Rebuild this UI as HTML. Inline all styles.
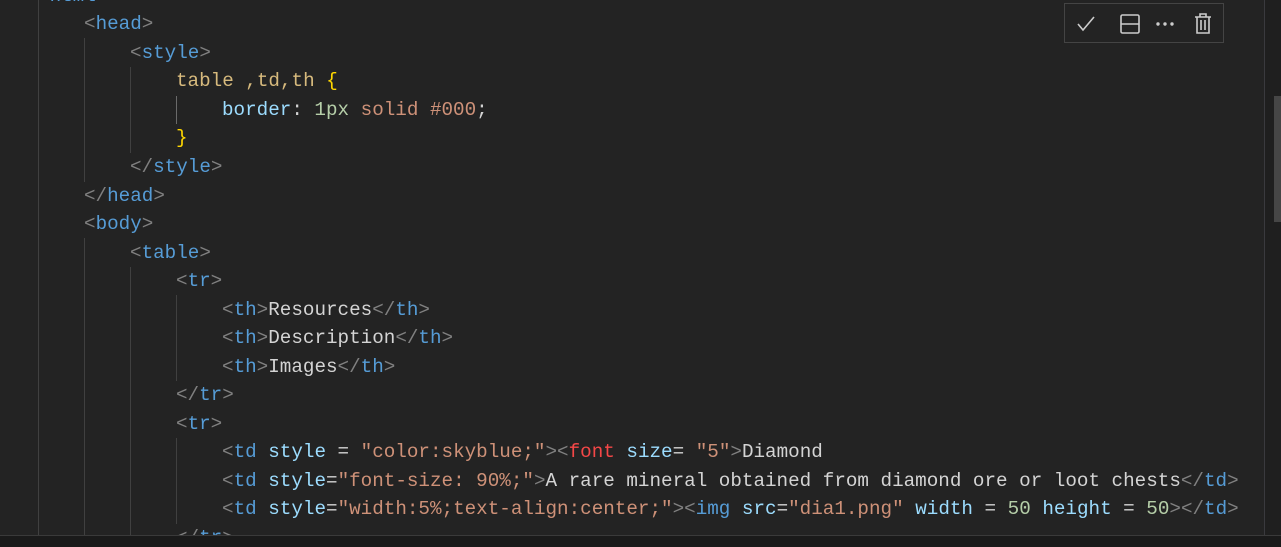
<!DOCTYPE html>
<html><head><style>
body{margin:0;width:1281px;height:547px;background:#1f1f1f;overflow:hidden;position:relative;font-family:"Liberation Mono",monospace;}
#ed{position:absolute;left:0;top:0;width:1264px;height:535px;background:#232323;overflow:hidden}
.l{position:absolute;left:0;height:28.6px;line-height:28.6px;font-size:19.25px;white-space:pre;color:#d4d4d4}
.g{position:absolute;width:1px;background:#404040}
.b{color:#808080}.t{color:#569cd6}.a{color:#9cdcfe}.s{color:#ce9178}.sel{color:#d7ba7d}.br{color:#ffd700}.n{color:#b5cea8}
#tb{position:absolute;left:1064px;top:3px;width:160px;height:40px;border:1px solid #444;background:#232323;box-sizing:border-box}
</style></head><body>
<div id="ed">
<div class="g" style="left:38px;top:0;height:535px"></div>
<div class="g" style="left:84px;top:38px;height:144px"></div>
<div class="g" style="left:84px;top:238px;height:297px"></div>
<div class="g" style="left:130px;top:67px;height:86px"></div>
<div class="g" style="left:130px;top:267px;height:268px"></div>
<div class="g" style="left:176px;top:96px;height:28px;background:#6a6a6a"></div>
<div class="g" style="left:176px;top:295px;height:86px"></div>
<div class="g" style="left:176px;top:438px;height:86px"></div>

<div class="l" style="top:-18px;left:38px"><span class="b">&lt;</span><span class="t">html</span><span class="b">&gt;</span></div>
<div class="l" style="top:10px;left:84px"><span class="b">&lt;</span><span class="t">head</span><span class="b">&gt;</span></div>
<div class="l" style="top:39px;left:130px"><span class="b">&lt;</span><span class="t">style</span><span class="b">&gt;</span></div>
<div class="l" style="top:67px;left:176px"><span class="sel">table ,td,th</span> <span class="br">{</span></div>
<div class="l" style="top:96px;left:222px"><span class="a">border</span>: <span class="n">1px</span> <span class="s">solid #000</span>;</div>
<div class="l" style="top:124px;left:176px"><span class="br">}</span></div>
<div class="l" style="top:153px;left:130px"><span class="b">&lt;/</span><span class="t">style</span><span class="b">&gt;</span></div>
<div class="l" style="top:182px;left:84px"><span class="b">&lt;/</span><span class="t">head</span><span class="b">&gt;</span></div>
<div class="l" style="top:210px;left:84px"><span class="b">&lt;</span><span class="t">body</span><span class="b">&gt;</span></div>
<div class="l" style="top:239px;left:130px"><span class="b">&lt;</span><span class="t">table</span><span class="b">&gt;</span></div>
<div class="l" style="top:267px;left:176px"><span class="b">&lt;</span><span class="t">tr</span><span class="b">&gt;</span></div>
<div class="l" style="top:296px;left:222px"><span class="b">&lt;</span><span class="t">th</span><span class="b">&gt;</span>Resources<span class="b">&lt;/</span><span class="t">th</span><span class="b">&gt;</span></div>
<div class="l" style="top:324px;left:222px"><span class="b">&lt;</span><span class="t">th</span><span class="b">&gt;</span>Description<span class="b">&lt;/</span><span class="t">th</span><span class="b">&gt;</span></div>
<div class="l" style="top:353px;left:222px"><span class="b">&lt;</span><span class="t">th</span><span class="b">&gt;</span>Images<span class="b">&lt;/</span><span class="t">th</span><span class="b">&gt;</span></div>
<div class="l" style="top:381px;left:176px"><span class="b">&lt;/</span><span class="t">tr</span><span class="b">&gt;</span></div>
<div class="l" style="top:410px;left:176px"><span class="b">&lt;</span><span class="t">tr</span><span class="b">&gt;</span></div>
<div class="l" style="top:438px;left:222px"><span class="b">&lt;</span><span class="t">td</span> <span class="a">style</span> = <span class="s">"color:skyblue;"</span><span class="b">&gt;&lt;</span><span style="color:#f44747">font</span> <span class="a">size</span>= <span class="s">"5"</span><span class="b">&gt;</span>Diamond</div>
<div class="l" style="top:467px;left:222px"><span class="b">&lt;</span><span class="t">td</span> <span class="a">style</span>=<span class="s">"font-size: 90%;"</span><span class="b">&gt;</span>A rare mineral obtained from diamond ore or loot chests<span class="b">&lt;/</span><span class="t">td</span><span class="b">&gt;</span></div>
<div class="l" style="top:495px;left:222px"><span class="b">&lt;</span><span class="t">td</span> <span class="a">style</span>=<span class="s">"width:5%;text-align:center;"</span><span class="b">&gt;&lt;</span><span class="t">img</span> <span class="a">src</span>=<span class="s">"dia1.png"</span> <span class="a">width</span> = <span class="n">50</span> <span class="a">height</span> = <span class="n">50</span><span class="b">&gt;&lt;/</span><span class="t">td</span><span class="b">&gt;</span></div>
<div class="l" style="top:524px;left:176px"><span class="b">&lt;/</span><span class="t">tr</span><span class="b">&gt;</span></div>

<div id="tb">
<svg width="160" height="40" viewBox="0 0 160 40" fill="none" stroke="#cccccc" stroke-width="1.6">
<path d="M13 20 L18 26 L29 13"/>
<rect x="56" y="11" width="18" height="18" rx="1.5"/><path d="M56 20 H74"/>
<circle cx="93" cy="20" r="0.9" fill="#ccc"/><circle cx="100" cy="20" r="0.9" fill="#ccc"/><circle cx="107" cy="20" r="0.9" fill="#ccc"/>
<path d="M130 13 H146 M135 13 V10 H141 V13 M132 13 V29 H144 V13 M136 16 V26 M140 16 V26"/>
</svg>
</div>
</div>
<div style="position:absolute;left:1264px;top:0;width:1px;height:535px;background:#3a3a3e"></div>
<div style="position:absolute;left:1274px;top:96px;width:7px;height:126px;background:#464646"></div>
<div style="position:absolute;left:0;top:535px;width:1281px;height:1px;background:#3a3a3a"></div>
<div style="position:absolute;left:0;top:536px;width:1281px;height:11px;background:#1a1a1a"></div>
</body></html>
